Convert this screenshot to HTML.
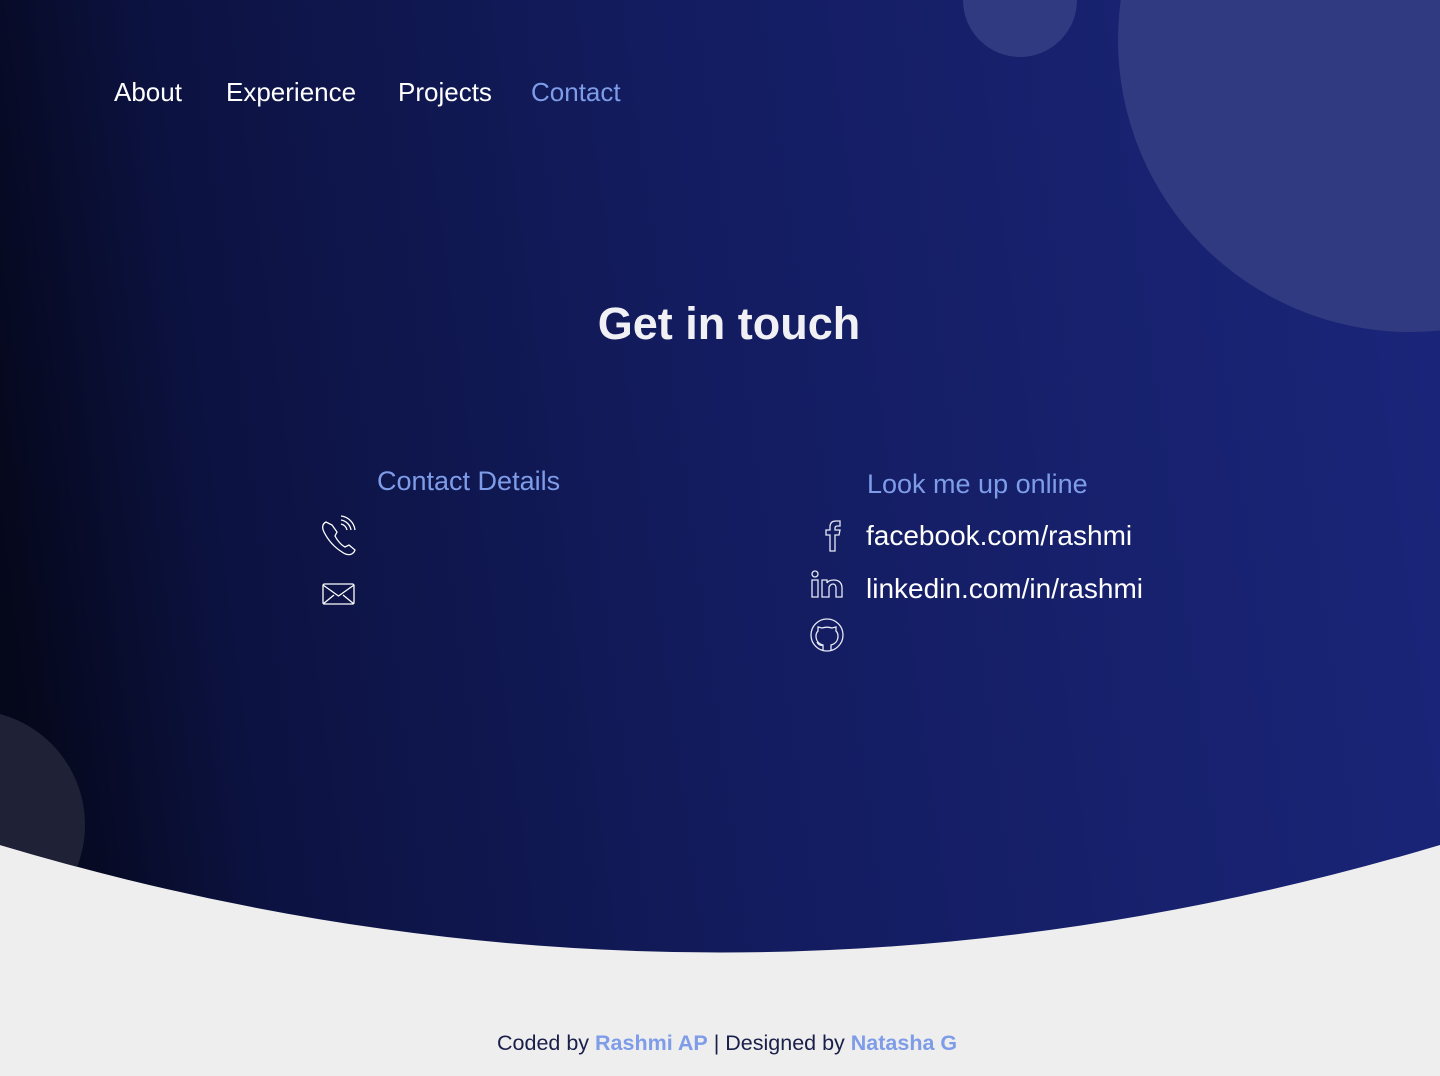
<!DOCTYPE html>
<html><head><meta charset="utf-8"><style>
*{margin:0;padding:0;box-sizing:border-box}
body{width:1440px;height:1076px;overflow:hidden;background:#eeeeee;font-family:"Liberation Sans",sans-serif;position:relative}
.bg{position:absolute;left:0;top:0;width:1440px;height:1076px}
.t{position:absolute;white-space:nowrap}
nav .t{top:77px;font-size:26px;color:#fff}
.acc,nav .t.acc{color:#7e9ce8}
</style></head><body>
<svg class="bg" width="1440" height="1076" viewBox="0 0 1440 1076">
<defs>
<linearGradient id="g" x1="0" y1="0.55" x2="1" y2="0.45">
<stop offset="0" stop-color="#05071a"/>
<stop offset="0.15" stop-color="#0c1240"/>
<stop offset="0.5" stop-color="#131c5f"/>
<stop offset="1" stop-color="#1a2579"/>
</linearGradient>
<clipPath id="c"><path d="M0 0H1440V845Q720 1060 0 845Z"/></clipPath>
</defs>
<rect width="1440" height="1076" fill="#eeeeee"/>
<g clip-path="url(#c)">
<rect width="1440" height="1076" fill="url(#g)"/>
<circle cx="1410" cy="40" r="292" fill="#303a80"/>
<circle cx="1020" cy="0" r="57" fill="#303a80"/>
<circle cx="-30" cy="825" r="115" fill="#1f2236"/>
</g>
<g fill="none" stroke="#fff" stroke-width="1.3">
<path d="M326 522c-4 2-4 6-2 10 4 8 10 15 18 20 4 3 9 4 12 0l1-2-6-5-4 2c-4-2-8-7-10-11l2-4-5-7z"/>
<path d="M341 524a8 8 0 0 1 6 6M341 520a12 12 0 0 1 10 10M341 516a16 16 0 0 1 14 14"/>
<rect x="323" y="584" width="31" height="20" rx="1.5"/>
<path d="M323 585l15.5 11 15.5-11M323 604l11-9M354 604l-11-9"/>
</g>
<g fill="none" stroke="#e8eaf6" stroke-width="1.3">
<path d="M830 551v-16h-4v-5h4v-3c0-4 2-6 6-6h4v5h-3c-1 0-2 1-2 2v2h5l-1 5h-4v16z"/>
<circle cx="815" cy="574" r="3"/>
<path d="M812 580h6v17h-6zM822 580h5v3c1-2 4-3 7-3 5 0 8 3 8 8v9h-6v-9c0-2-1-4-3-4s-4 2-4 4v9h-7z"/>
<circle cx="827" cy="635" r="16"/>
<path d="M823 650v-5c-4-1-7-4-7-9 0-2 1-4 2-5l-0-4 4 1c3-1 7-1 10 0l4-1 0 4c1 1 2 3 2 5 0 5-3 8-7 9v5"/>
<path d="M823 645c-3 1-5-1-6-3"/>
</g>
</svg>
<nav>
<div class="t" style="left:114px">About</div>
<div class="t" style="left:226px">Experience</div>
<div class="t" style="left:398px">Projects</div>
<div class="t acc" style="left:531px">Contact</div>
</nav>
<div class="t" style="left:0;width:1458px;text-align:center;top:298px;font-size:45px;font-weight:bold;color:#f0f0f5">Get in touch</div>
<div class="t acc" style="left:377px;top:466px;font-size:27px">Contact Details</div>
<div class="t acc" style="left:867px;top:469px;font-size:27px">Look me up online</div>
<div class="t" style="left:866px;top:520px;font-size:28px;color:#fff">facebook.com/rashmi</div>
<div class="t" style="left:866px;top:573px;font-size:28px;color:#fff">linkedin.com/in/rashmi</div>
<div class="t" style="left:497px;top:1031px;font-size:21.5px;color:#1a1f4a">Coded by <b class="acc">Rashmi AP</b> | Designed by <b class="acc">Natasha G</b></div>
</body></html>
